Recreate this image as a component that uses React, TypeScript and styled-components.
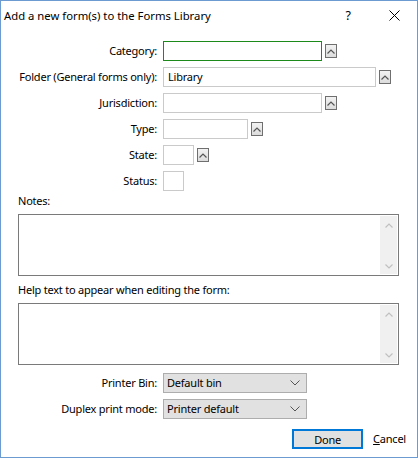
import React from "react";
import styled, { createGlobalStyle } from "styled-components";

const Global = createGlobalStyle`
  html, body { margin: 0; padding: 0; background: #ffffff; }
  body { font-family: "Noto Sans", "Liberation Sans", sans-serif; font-size: 11px; letter-spacing: -0.22px; color: #000; }
  * { box-sizing: border-box; }
`;

const Window = styled.div`
  width: 418px;
  height: 458px;
  border: 1px solid #6b9bd1;
  background: #fff;
  display: flex;
  flex-direction: column;
`;

const TitleBar = styled.div`
  height: 30px;
  display: flex;
  align-items: center;
  padding-left: 3px;
  padding-bottom: 2px;
`;

const Title = styled.div`
  flex: 1;
  font-size: 11.3px;
  letter-spacing: 0;
  color: #000;
`;

const TitleButton = styled.div`
  width: 46px;
  height: 28px;
  display: flex;
  align-items: center;
  justify-content: center;
  font-size: 12.5px;
  color: #000;
`;

const Body = styled.div`
  padding: 10px 18px 0 17px;
  display: flex;
  flex-direction: column;
`;

const FormGrid = styled.div`
  display: grid;
  grid-template-columns: 139px 1fr;
  column-gap: 6px;
  row-gap: 6px;
  align-items: center;
`;

const Label = styled.label`
  text-align: right;
  white-space: nowrap;
  line-height: 20px;
`;

const FieldLine = styled.div`
  display: flex;
  align-items: center;
  gap: 3px;
  height: 20px;
`;

const TextBox = styled.div<{ $w: number; $focused?: boolean }>`
  width: ${(p) => p.$w}px;
  height: 20px;
  border: 1px solid ${(p) => (p.$focused ? "#1b8a1b" : "#cacaca")};
  padding: 0 4px;
  line-height: 18px;
  white-space: nowrap;
`;

const UpButton = styled.div`
  width: 12px;
  height: 14px;
  border: 1px solid #6f6f6f;
  background: linear-gradient(#f2f2f2, #dcdcdc);
  display: flex;
  align-items: center;
  justify-content: center;
`;

const SectionLabel = styled.div<{ $top: number }>`
  margin-top: ${(p) => p.$top}px;
  line-height: 16px;
  margin-bottom: 5px;
`;

const TextArea = styled.div`
  height: 62px;
  border: 1px solid #7a7a7a;
  display: flex;
  justify-content: flex-end;
  padding: 1px;
`;

const ScrollBar = styled.div`
  width: 17px;
  background: #f0f0f0;
  display: flex;
  flex-direction: column;
  justify-content: space-between;
  align-items: center;
  padding: 7px 0 5px;
`;

const SelectGrid = styled(FormGrid)`
  margin-top: 8px;
`;

const Select = styled.div`
  width: 144px;
  height: 20px;
  background: #e1e1e1;
  border: 1px solid #adadad;
  display: flex;
  align-items: center;
  justify-content: space-between;
  padding: 0 6px 0 3px;
  line-height: 18px;
`;

const Footer = styled.div`
  margin-top: 10px;
  margin-right: -7px;
  display: flex;
  justify-content: flex-end;
  align-items: center;
  gap: 10px;
`;

const DoneButton = styled.div`
  width: 71px;
  height: 20px;
  border: 2px solid #0078d7;
  background: #e1e1e1;
  display: flex;
  align-items: center;
  justify-content: center;
`;

const LinkButton = styled.div`
  line-height: 20px;
  span { text-decoration: underline; }
`;

const Caret = ({ down, color }: { down?: boolean; color: string }) => (
  <svg width="8" height="5" viewBox="0 0 8 5">
    <path
      d={down ? "M0.5 0.5 L4 4 L7.5 0.5" : "M0.5 4.5 L4 1 L7.5 4.5"}
      stroke={color}
      strokeWidth="1.2"
      fill="none"
    />
  </svg>
);

const Up = () => (
  <UpButton>
    <Caret color="#555" />
  </UpButton>
);

const Chevron = () => (
  <svg width="10" height="6" viewBox="0 0 10 6">
    <path d="M0.5 0.5 L5 5 L9.5 0.5" stroke="#555" strokeWidth="1" fill="none" />
  </svg>
);

const CloseIcon = () => (
  <svg width="11" height="11" viewBox="0 0 11 11">
    <path d="M0.5 0.5 L10.5 10.5 M10.5 0.5 L0.5 10.5" stroke="#000" strokeWidth="1" />
  </svg>
);

const rows: { label: string; w: number; value?: string; up: boolean; focused?: boolean }[] = [
  { label: "Category:", w: 159, up: true, focused: true },
  { label: "Folder (General forms only):", w: 213, value: "Library", up: true },
  { label: "Jurisdiction:", w: 159, up: true },
  { label: "Type:", w: 85, up: true },
  { label: "State:", w: 31, up: true },
  { label: "Status:", w: 21, up: false },
];

export default function App() {
  return (
    <>
      <Global />
      <Window>
        <TitleBar>
          <Title>Add a new form(s) to the Forms Library</Title>
          <TitleButton>?</TitleButton>
          <TitleButton>
            <CloseIcon />
          </TitleButton>
        </TitleBar>
        <Body>
          <FormGrid>
            {rows.map((r) => (
              <React.Fragment key={r.label}>
                <Label>{r.label}</Label>
                <FieldLine>
                  <TextBox $w={r.w} $focused={r.focused}>
                    {r.value}
                  </TextBox>
                  {r.up && <Up />}
                </FieldLine>
              </React.Fragment>
            ))}
          </FormGrid>
          <SectionLabel $top={2}>Notes:</SectionLabel>
          <TextArea>
            <ScrollBar>
              <Caret color="#c0c0c0" />
              <Caret down color="#c0c0c0" />
            </ScrollBar>
          </TextArea>
          <SectionLabel $top={6}>Help text to appear when editing the form:</SectionLabel>
          <TextArea>
            <ScrollBar>
              <Caret color="#c0c0c0" />
              <Caret down color="#c0c0c0" />
            </ScrollBar>
          </TextArea>
          <SelectGrid>
            <Label>Printer Bin:</Label>
            <FieldLine>
              <Select>
                Default bin
                <Chevron />
              </Select>
            </FieldLine>
            <Label>Duplex print mode:</Label>
            <FieldLine>
              <Select>
                Printer default
                <Chevron />
              </Select>
            </FieldLine>
          </SelectGrid>
          <Footer>
            <DoneButton>Done</DoneButton>
            <LinkButton>
              <span>C</span>ancel
            </LinkButton>
          </Footer>
        </Body>
      </Window>
    </>
  );
}
